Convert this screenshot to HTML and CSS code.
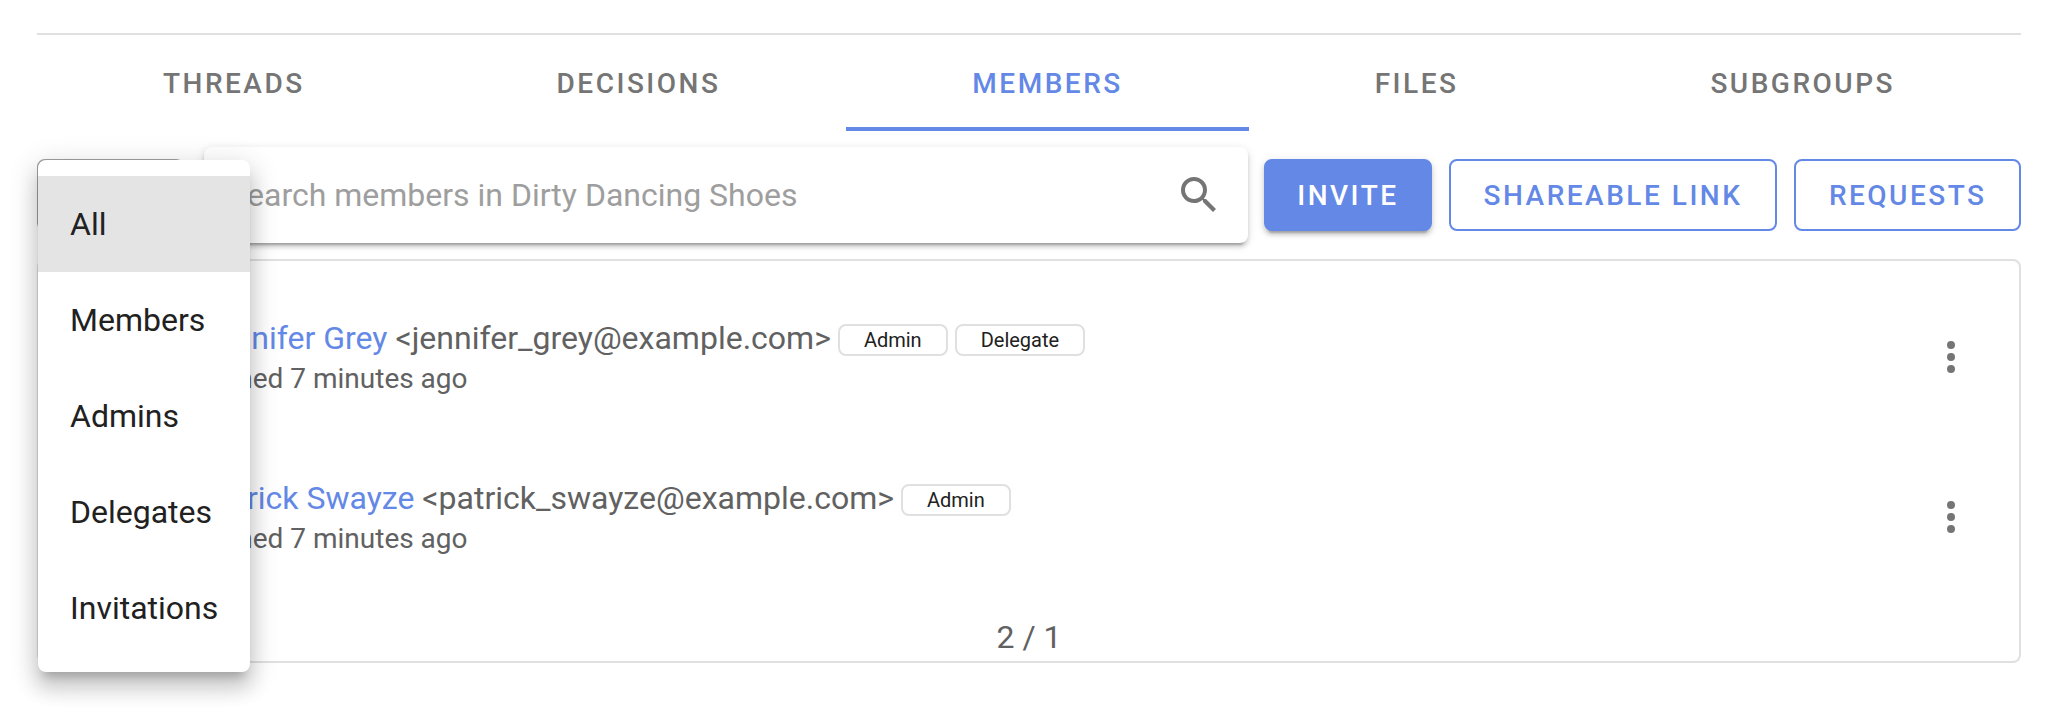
FILE: index.html
```html
<!DOCTYPE html>
<html lang="en">
<head>
    <meta charset="UTF-8">
    <title>Members</title>
    <link rel="stylesheet" href="styles.css">
</head>
<body>
    <div id="page">
        <nav class="tabs">
            <a class="tab">Threads</a>
            <a class="tab">Decisions</a>
            <a class="tab active">Members</a>
            <a class="tab">Files</a>
            <a class="tab">Subgroups</a>
        </nav>

        <div class="toolbar">
            <div class="select"></div>
            <div class="search">
                <span class="placeholder">Search members in Dirty Dancing Shoes</span>
                <svg class="search-icon" viewBox="0 0 24 24"><path d="M9.5,3A6.5,6.5 0 0,1 16,9.5C16,11.11 15.41,12.59 14.44,13.73L14.71,14H15.5L20.5,19L19,20.5L14,15.5V14.71L13.73,14.44C12.59,15.41 11.11,16 9.5,16A6.5,6.5 0 0,1 3,9.5A6.5,6.5 0 0,1 9.5,3M9.5,5C7,5 5,7 5,9.5C5,12 7,14 9.5,14C12,14 14,12 14,9.5C14,7 12,5 9.5,5Z"/></svg>
            </div>
            <button class="btn primary">Invite</button>
            <button class="btn link">Shareable link</button>
            <button class="btn requests">Requests</button>
        </div>

        <div class="card">
            <div class="row">
                <div class="row-text">
                    <div class="title"><a class="name">Jennifer Grey</a> &lt;jennifer_grey@example.com&gt;<span class="chip">Admin</span><span class="chip">Delegate</span></div>
                    <div class="sub">Joined 7 minutes ago</div>
                </div>
                <svg class="dots" viewBox="0 0 24 24"><path d="M12,16A2,2 0 0,1 14,18A2,2 0 0,1 12,20A2,2 0 0,1 10,18A2,2 0 0,1 12,16M12,10A2,2 0 0,1 14,12A2,2 0 0,1 12,14A2,2 0 0,1 10,12A2,2 0 0,1 12,10M12,4A2,2 0 0,1 14,6A2,2 0 0,1 12,8A2,2 0 0,1 10,6A2,2 0 0,1 12,4Z"/></svg>
            </div>
            <div class="row">
                <div class="row-text">
                    <div class="title"><a class="name">Patrick Swayze</a> &lt;patrick_swayze@example.com&gt;<span class="chip">Admin</span></div>
                    <div class="sub">Joined 7 minutes ago</div>
                </div>
                <svg class="dots" viewBox="0 0 24 24"><path d="M12,16A2,2 0 0,1 14,18A2,2 0 0,1 12,20A2,2 0 0,1 10,18A2,2 0 0,1 12,16M12,10A2,2 0 0,1 14,12A2,2 0 0,1 12,14A2,2 0 0,1 10,12A2,2 0 0,1 12,10M12,4A2,2 0 0,1 14,6A2,2 0 0,1 12,8A2,2 0 0,1 10,6A2,2 0 0,1 12,4Z"/></svg>
            </div>
            <div class="pager">2 / 1</div>
        </div>

        <ul class="menu">
            <li class="selected">All</li>
            <li>Members</li>
            <li>Admins</li>
            <li>Delegates</li>
            <li>Invitations</li>
        </ul>
    </div>
</body>
</html>
```

FILE: styles.css
```css
body {
    font-family: Roboto, sans-serif;
    background-color: #fff;
    margin: 0;
    padding: 0;
}

#page {
    position: relative;
    box-sizing: border-box;
    min-height: 100vh;
    padding: 33px 45px 0 37px;
}

.tabs {
    display: flex;
    height: 96px;
    border-top: 2px solid #e0e0e0;
}

.tab {
    flex: 1 1 auto;
    display: flex;
    align-items: center;
    justify-content: center;
    padding-top: 5px;
    font-size: 28px;
    font-weight: 500;
    letter-spacing: 2.5px;
    text-transform: uppercase;
    color: #757575;
    border-bottom: 4px solid transparent;
}

.tab.active {
    color: #6488e6;
    border-bottom-color: #6488e6;
}

.toolbar {
    display: flex;
    align-items: center;
    height: 96px;
    margin-top: 16px;
}

.select {
    width: 147px;
    height: 72px;
    margin-right: 20px;
    box-sizing: border-box;
    border: 2px solid #a0a0a0;
    border-radius: 8px;
}

.search {
    flex: 1;
    display: flex;
    align-items: center;
    justify-content: space-between;
    height: 96px;
    padding: 0 25px 0 24px;
    box-sizing: border-box;
    border-radius: 8px;
    margin-right: 16px;
    box-shadow: 0 6px 2px -4px rgba(0,0,0,.2), 0 4px 4px 0 rgba(0,0,0,.14), 0 2px 10px 0 rgba(0,0,0,.12);
}

.placeholder {
    font-size: 32px;
    color: #9e9e9e;
}

.search-icon {
    width: 48px;
    height: 48px;
    fill: #757575;
}

.btn {
    height: 72px;
    padding: 0 32px;
    margin-left: 17px;
    box-sizing: border-box;
    background: #fff;
    border: 2px solid #6488e6;
    border-radius: 8px;
    color: #6488e6;
    font-family: Roboto, sans-serif;
    font-size: 28px;
    font-weight: 500;
    letter-spacing: 2.5px;
    text-transform: uppercase;
}

.btn.primary {
    margin-left: 0;
    padding: 0 31px;
    background: #6488e6;
    color: #fff;
    box-shadow: 0 6px 2px -4px rgba(0,0,0,.2), 0 4px 4px 0 rgba(0,0,0,.14), 0 2px 10px 0 rgba(0,0,0,.12);
}

.btn.link {
    padding: 0 33px;
}

.btn.requests {
    padding: 0 32.5px;
}

.card {
    margin-top: 16px;
    padding-top: 16px;
    border: 2px solid #e0e0e0;
    border-radius: 8px;
}

.row {
    display: flex;
    align-items: center;
    justify-content: space-between;
    height: 160px;
    padding: 0 44px 0 160px;
}

.title {
    display: flex;
    align-items: center;
    padding-top: 1px;
    font-size: 32px;
    line-height: 40px;
    color: #616161;
    white-space: pre;
}

.name {
    color: #6488e6;
}

.sub {
    padding-top: 2px;
    font-size: 28px;
    line-height: 38px;
    color: #616161;
}

.chip {
    height: 32px;
    margin-left: 7px;
    padding: 0 24px;
    box-sizing: border-box;
    display: flex;
    align-items: center;
    position: relative;
    top: 2px;
    font-size: 20px;
    color: #212121;
    border: 2px solid #e0e0e0;
    border-radius: 8px;
}

.dots {
    width: 48px;
    height: 48px;
    fill: #757575;
}

.pager {
    height: 64px;
    box-sizing: border-box;
    padding-top: 16px;
    line-height: 48px;
    text-align: center;
    font-size: 32px;
    color: #616161;
}

.menu {
    position: absolute;
    left: 38px;
    top: 160px;
    width: 212px;
    margin: 0;
    padding: 16px 0;
    list-style: none;
    background: #fff;
    border-radius: 8px;
    box-shadow: 0 10px 10px -6px rgba(0,0,0,.2), 0 16px 20px 2px rgba(0,0,0,.14), 0 6px 28px 4px rgba(0,0,0,.12);
}

.menu li {
    height: 96px;
    line-height: 96px;
    padding-left: 32px;
    font-size: 32px;
    color: #212121;
}

.menu li.selected {
    background: #e4e4e4;
}
```
